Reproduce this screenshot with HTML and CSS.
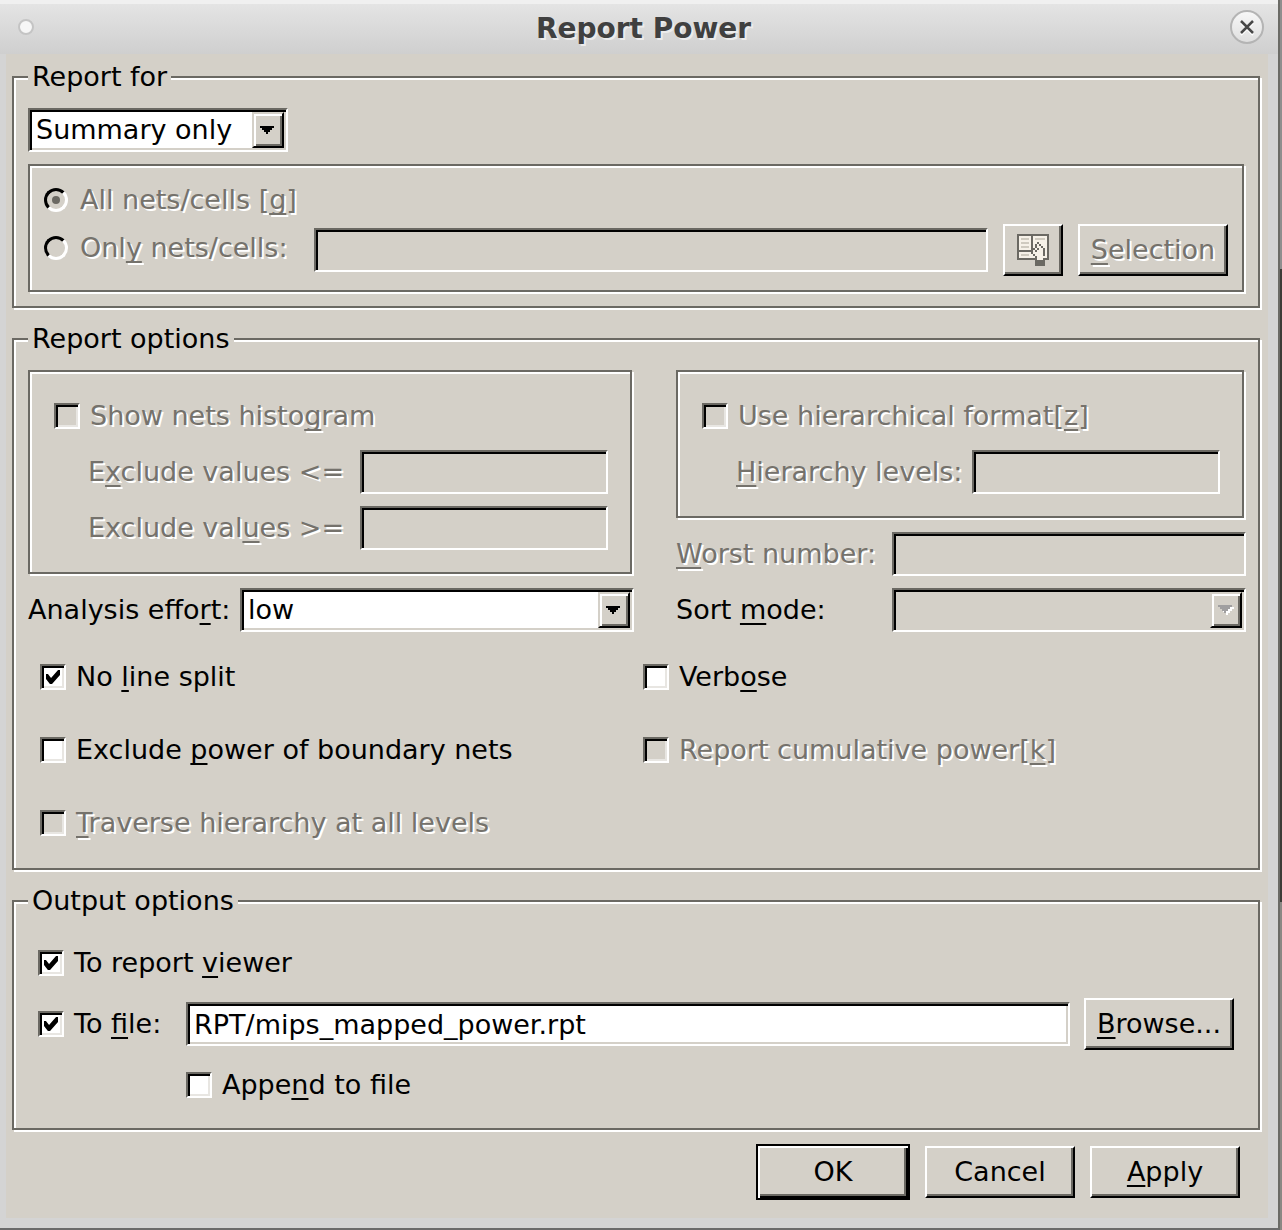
FILE: index.html
```html
<!DOCTYPE html>
<html lang="en">
<head>
<meta charset="utf-8">
<title>Report Power</title>
<link rel="stylesheet" href="styles.css">
</head>
<body>
<main class="window">
  <header class="titlebar">
    <button class="menu-dot" type="button" aria-label="Window menu"></button>
    <h1 class="title">Report Power</h1>
    <button class="close" type="button" aria-label="Close">
      <svg width="36" height="36" viewBox="0 0 36 36" aria-hidden="true">
        <defs><linearGradient id="knob" x2="0" y2="1"><stop stop-color="#f8f8f8"/><stop offset="1" stop-color="#dedede"/></linearGradient></defs>
        <circle cx="18" cy="18" r="16" fill="url(#knob)" stroke="#b4b4b4" stroke-width="2"/>
        <path d="M12 12L24 24M24 12L12 24" stroke="#fff" stroke-width="2" transform="translate(0 2)"/>
        <path d="M12 12L24 24M24 12L12 24" stroke="#484848" stroke-width="2.500"/>
      </svg>
    </button>
  </header>

  <form class="content">
    <fieldset class="group">
      <legend>Report for</legend>
      <div class="stack">
        <div class="combo combo-summary">
          <select aria-label="Report for"><option>Summary only</option></select>
          <span class="arrow"><svg width="16" height="10" viewBox="0 -1 16 10" aria-hidden="true" shape-rendering="crispEdges"><path d="M0 0H14V2H12V4H10V6H8V8H6V6H4V4H2V2H0Z"/></svg></span>
        </div>
        <div class="panel nets">
          <label class="choice off"><input type="radio" name="scope" checked disabled><span>All nets/cells [<u>g</u>]</span></label>
          <div class="nets-row">
            <label class="choice off"><input type="radio" name="scope" disabled><span>Onl<u>y</u> nets/cells:</span></label>
            <input class="field" type="text" aria-label="Nets or cells" disabled>
            <button class="btn" type="button" aria-label="Pick from list" disabled>
              <svg width="32" height="32" viewBox="0 0 16 16" aria-hidden="true" shape-rendering="crispEdges">
                <path fill="#6b6963" d="M0 0h16v13H0z"/>
                <path fill="#f6f1e8" d="M1 1h6v7H1zM8 1h7v11H8zM1 9h7v3H1z"/>
                <path fill="#cfcabf" d="M2 2h4v1H2zM2 4h4v1H2zM2 6h4v1H2zM9 2h5v1H9zM2 10h4v1H2z"/>
                <path fill="#6b6963" d="M10 4h1v1h-1zM9 5h1v1H9zM11 5h1v1h-1zM9 6h1v1H9zM12 6h1v1h-1zM8 7h1v1H8zM10 7h1v1h-1zM13 7h1v4h-1zM7 8h1v1H7zM9 8h1v1H9zM7 9h1v1H7zM8 10h1v1H8zM9 11h1v2H9zM9 13h5v3H9z"/>
                <path fill="#f6f1e8" d="M10 12h3v1h-3z"/>
              </svg>
            </button>
            <button class="btn" type="button" disabled><u>S</u>election</button>
          </div>
        </div>
      </div>
    </fieldset>

    <fieldset class="group">
      <legend>Report options</legend>
      <div class="columns">
        <div class="stack">
          <div class="panel options">
            <label class="choice off"><input type="checkbox" disabled><span>Show nets histo<u>g</u>ram</span></label>
            <div class="sub-row off"><label for="le">E<u>x</u>clude values &lt;=</label><input class="field" id="le" type="text" disabled></div>
            <div class="sub-row off"><label for="ge">Exclude val<u>u</u>es &gt;=</label><input class="field" id="ge" type="text" disabled></div>
          </div>
          <div class="row">
            <label for="effort">Analysis effo<u>r</u>t:</label>
            <div class="combo">
              <select id="effort"><option>low</option></select>
              <span class="arrow"><svg width="16" height="10" viewBox="0 -1 16 10" aria-hidden="true" shape-rendering="crispEdges"><path d="M0 0H14V2H12V4H10V6H8V8H6V6H4V4H2V2H0Z"/></svg></span>
            </div>
          </div>
        </div>
        <div class="stack">
          <div class="panel options">
            <label class="choice off"><input type="checkbox" disabled><span>Use hierarchical format[<u>z</u>]</span></label>
            <div class="sub-row off"><label for="levels"><u>H</u>ierarchy levels:</label><input class="field" id="levels" type="text" disabled></div>
          </div>
          <div class="row row-right off"><label for="worst"><u>W</u>orst number:</label><input class="field" id="worst" type="text" disabled></div>
          <div class="row row-right">
            <label for="sort">Sort <u>m</u>ode:</label>
            <div class="combo">
              <select id="sort" disabled><option></option></select>
              <span class="arrow"><svg width="16" height="10" viewBox="0 0 16 10" aria-hidden="true" shape-rendering="crispEdges"><path fill="#fff" d="M2 2H16V4H14V6H12V8H10V10H8V8H6Z"/><path fill="#a09fa0" d="M0 0H14V2H12V4H10V6H8V8H6V6H4V4H2V2H0Z"/></svg></span>
            </div>
          </div>
        </div>
      </div>
      <div class="checks">
        <label class="choice"><input type="checkbox" checked><span>No <u>l</u>ine split</span></label>
        <label class="choice"><input type="checkbox"><span>Verb<u>o</u>se</span></label>
        <label class="choice"><input type="checkbox"><span>Exclude <u>p</u>ower of boundary nets</span></label>
        <label class="choice off"><input type="checkbox" disabled><span>Report cumulative power[<u>k</u>]</span></label>
        <label class="choice off"><input type="checkbox" disabled><span><u>T</u>raverse hierarchy at all levels</span></label>
      </div>
    </fieldset>

    <fieldset class="group">
      <legend>Output options</legend>
      <div class="output">
        <label class="choice wide"><input type="checkbox" checked><span>To report <u>v</u>iewer</span></label>
        <label class="choice"><input type="checkbox" checked><span>To <u>f</u>ile:</span></label>
        <input class="field" type="text" aria-label="File name" value="RPT/mips_mapped_power.rpt">
        <button class="btn" type="button"><u>B</u>rowse...</button>
        <label class="choice append"><input type="checkbox"><span>Appe<u>n</u>d to file</span></label>
      </div>
    </fieldset>

    <footer class="actions">
      <button class="btn default" type="submit">OK</button>
      <button class="btn" type="button">Cancel</button>
      <button class="btn" type="button"><u>A</u>pply</button>
    </footer>
  </form>
</main>
</body>
</html>
```
FILE: styles.css
```css
:root {
  --face: #d4d0c8;
  --dark: #6b6963;
  --muted: #75726c;
  --frame: #d4d4d4;
}

* { box-sizing: border-box; }

body {
  margin: 0;
  padding-right: 2px;
  background: linear-gradient(#8e8e8e 0 269px, #3c3c37 269px 902px, #8a8884 902px);
  color: #000;
  font: 27px/32px "DejaVu Sans", sans-serif;
}

input, select, button { font: inherit; color: inherit; margin: 0; border-radius: 0; }

u {
  text-decoration: underline 2px;
  text-underline-offset: 4px;
  text-decoration-skip-ink: none;
}

.window {
  padding-bottom: 10px;
  background: var(--frame);
  border-right: 2px solid #6b6b66;
  border-bottom: 2px solid #6b6b6b;
}

/* Title bar */
.titlebar {
  display: grid;
  grid-template-columns: 36px 1fr 36px;
  align-items: center;
  height: 54px;
  padding: 0 13px 0 8px;
  background: linear-gradient(#f0f0f0 0 4px, #e4e4e4 4px, #cfcfcf);
}

.title {
  margin: 0;
  padding: 3px 0 0 14px;
  color: #404040;
  font-size: 28px;
  font-weight: bold;
  line-height: 32px;
  text-align: center;
  text-shadow: 2px 2px 0 #ececec;
}

.menu-dot {
  justify-self: center;
  width: 16px;
  height: 16px;
  padding: 0;
  border: 2px solid #c4c4c4;
  border-radius: 50%;
  background: #f6f6f6;
}

.close { display: flex; padding: 0; border: 0; background: none; }

/* Dialog body */
.content {
  margin: 0 10px 0 6px;
  padding: 7px 6px 18px;
  background: var(--face);
}

.group, .panel {
  border: 2px solid var(--dark);
  box-shadow: 2px 2px 0 #fff, inset 2px 2px 0 #fff;
}

.group {
  min-width: 0;
  margin: 0 2px 0 0;
  padding: 15px 12px 12px 14px;
}

.group + .group { margin-top: 15px; }

.group legend { padding: 0 4px; background: var(--face); }

.panel { margin: 0 2px 2px 0; }

.stack { display: flex; flex-direction: column; gap: 12px; }

.off { color: var(--muted); text-shadow: 2px 2px 0 #fff; }

/* Text fields and combo boxes */
.field, .combo {
  width: 100%;
  min-width: 0;
  height: 44px;
  border: 2px solid;
  border-color: var(--dark) #fff #fff var(--dark);
  background: #fff;
  box-shadow: inset 2px 2px 0 #000, inset -2px -2px 0 var(--face);
}

.field { padding: 2px 6px; outline: 0; }

.field:disabled { background: var(--face); }

.combo { display: grid; padding: 2px; }

.combo select {
  grid-area: 1 / 1;
  min-width: 0;
  padding: 0 36px 0 4px;
  border: 0;
  outline: 0;
  appearance: none;
  background: #fff;
  opacity: 1;
}

.combo select:disabled { background: var(--face); }

.combo-summary { width: 260px; }

.arrow {
  grid-area: 1 / 1;
  justify-self: end;
  display: flex;
  align-items: center;
  justify-content: center;
  width: 32px;
  border: 2px solid;
  border-color: var(--face) #000 #000 var(--face);
  background: var(--face);
  box-shadow: inset 2px 2px 0 #fff, inset -2px -2px 0 var(--dark);
  pointer-events: none;
}

/* Push buttons */
.btn {
  display: flex;
  align-items: center;
  justify-content: center;
  width: 100%;
  height: 52px;
  padding: 0;
  border: 2px solid;
  border-color: #fff #000 #000 #fff;
  background: var(--face);
  box-shadow: inset -2px -2px 0 var(--dark);
  white-space: pre;
}

.btn:disabled { color: var(--muted); text-shadow: 2px 2px 0 #fff; }

/* Tick boxes and radios */
.choice { display: flex; align-items: center; gap: 10px; white-space: nowrap; }

.choice input[type="checkbox"] {
  flex: none;
  display: grid;
  place-content: center;
  width: 26px;
  height: 26px;
  appearance: none;
  border: 2px solid;
  border-color: var(--dark) #fff #fff var(--dark);
  background: #fff;
  box-shadow: inset 2px 2px 0 #000, inset -2px -2px 0 #e8e6e2;
}

.choice input[type="checkbox"]:disabled { background: var(--face); }

.choice input[type="checkbox"]:checked::before {
  content: "";
  width: 14px;
  height: 14px;
  background: #000;
  clip-path: polygon(0 28%, 14% 28%, 36% 57%, 86% 0, 100% 0, 100% 36%, 43% 100%, 28% 100%, 0 64%);
}

.choice input[type="radio"] {
  flex: none;
  display: grid;
  place-content: center;
  width: 24px;
  height: 24px;
  appearance: none;
  border: 3px solid;
  border-color: #000 #fff #fff #000;
  border-radius: 50%;
}

.choice input[type="radio"]:checked::before {
  content: "";
  width: 8px;
  height: 8px;
  border-radius: 50%;
  background: var(--dark);
}

/* Net selection */
.nets { display: grid; grid-template-rows: 40px 52px; gap: 4px; padding: 14px; }

.nets .choice { gap: 12px; }

.nets-row {
  display: grid;
  grid-template-columns: 255px 1fr 60px 150px;
  gap: 15px;
  align-items: center;
}

.nets-row .choice { padding-bottom: 4px; }

/* Report options */
.columns { display: grid; grid-template-columns: 606fr 570fr; gap: 42px; }

.options { display: grid; grid-auto-rows: 44px; gap: 12px; padding: 22px 22px 22px 24px; }

.sub-row {
  display: grid;
  grid-template-columns: 1fr 248px;
  align-items: center;
  padding-left: 34px;
  white-space: nowrap;
}

.sub-row label { min-width: 0; }

.row {
  display: grid;
  grid-template-columns: 212px 1fr;
  align-items: center;
  white-space: nowrap;
}

.row-right { grid-template-columns: 216px 1fr; }

.checks {
  display: grid;
  grid-template-columns: 1fr 1fr;
  gap: 41px 0;
  padding: 29px 0 17px 12px;
}

/* Output options */
.output {
  display: grid;
  grid-template-columns: 134px 1fr 150px;
  gap: 19px 14px;
  align-items: center;
  padding: 15px 12px 15px 10px;
}

.wide { grid-column: 1 / -1; }
.append { grid-column: 2 / -1; }

.actions {
  display: flex;
  align-items: center;
  justify-content: flex-end;
  gap: 15px;
  margin-top: 14px;
  padding-right: 22px;
}

.actions .btn { width: 150px; }

.actions .default {
  width: 154px;
  height: 56px;
  border-color: #000;
  box-shadow: inset 2px 2px 0 #fff, inset -2px -2px 0 #000, inset -4px -4px 0 var(--dark);
}
```
